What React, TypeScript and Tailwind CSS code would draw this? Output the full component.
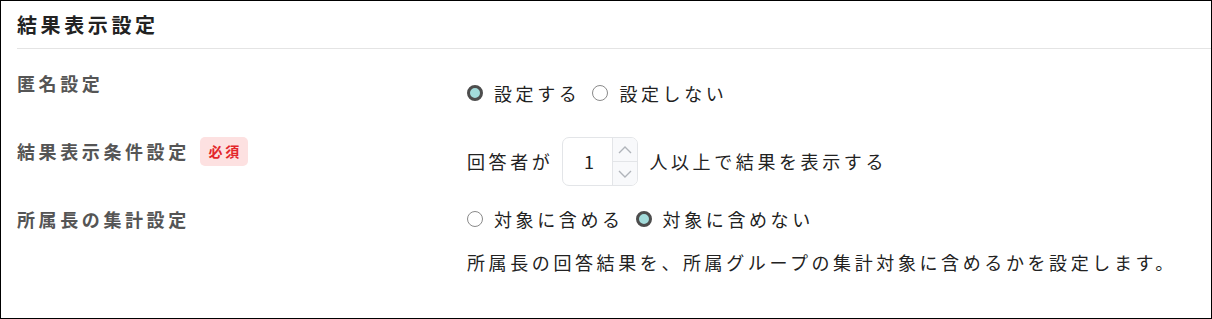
import React from 'react';

const FONT = '"Noto Sans CJK JP", "Noto Sans", sans-serif';

function Radio({ checked, label }: { checked?: boolean; label: string }) {
  return (
    <label className="flex items-center">
      {checked ? (
        <span className="box-border h-[16px] w-[16px] shrink-0 rounded-full border-[3px] border-[#4d4d4d] bg-[#a3dcdb]" />
      ) : (
        <span className="box-border h-[16px] w-[16px] shrink-0 rounded-full border border-[#8a8a8a] bg-white" />
      )}
      <span className="ml-[11px] mr-[12px]">{label}</span>
    </label>
  );
}

function NumberInput({ value }: { value: number }) {
  return (
    <div className="flex h-[49px] w-[76px] overflow-hidden rounded-[7px] border border-[#e3e5e8] bg-white">
      <div className="flex flex-1 items-center justify-center pl-[2px] tracking-normal">{value}</div>
      <div className="flex w-[25px] flex-col border-l border-[#e3e5e8] bg-[#f8f9fb]">
        <div className="flex flex-1 items-center justify-center border-b border-[#e3e5e8]">
          <svg width="14" height="8" viewBox="0 0 14 8" fill="none" stroke="#b0b4ba" strokeWidth="1.4">
            <path d="M1 7l6-6 6 6" />
          </svg>
        </div>
        <div className="flex flex-1 items-center justify-center">
          <svg width="14" height="8" viewBox="0 0 14 8" fill="none" stroke="#b0b4ba" strokeWidth="1.4">
            <path d="M1 1l6 6 6-6" />
          </svg>
        </div>
      </div>
    </div>
  );
}

export default function App() {
  return (
    <div
      className="box-border h-[319px] w-[1212px] border border-black bg-white text-[18px] tracking-[0.2em] text-[#222]"
      style={{ fontFamily: FONT }}
    >
      <div className="ml-[16px] flex h-[48px] items-center border-b border-[#e4e4e4] text-[20px] font-bold text-[#222]">
        結果表示設定
      </div>

      <div className="px-[16px]">
        {/* 匿名設定 */}
        <div className="flex pt-[22px]">
          <div className="w-[450px] shrink-0 leading-[24px] font-bold text-[#555]">匿名設定</div>
          <div className="flex pt-[10px] leading-[24px]">
            <Radio checked label="設定する" />
            <Radio label="設定しない" />
          </div>
        </div>

        {/* 結果表示条件設定 */}
        <div className="mt-[32px] flex items-start">
          <div className="flex h-[29px] w-[450px] shrink-0 items-center font-bold text-[#555]">
            <span>結果表示条件設定</span>
            <span className="ml-[10px] flex h-[29px] w-[48px] items-center justify-center rounded-[5px] bg-[#fde1e1] pl-[3px] text-[14px] tracking-[0.2em] text-[#e3262b]">
              必須
            </span>
          </div>
          <div className="flex h-[49px] items-center">
            <span className="mr-[9px]">回答者が</span>
            <NumberInput value={1} />
            <span className="ml-[11px]">人以上で結果を表示する</span>
          </div>
        </div>

        {/* 所属長の集計設定 */}
        <div className="mt-[21px] flex items-start">
          <div className="w-[450px] shrink-0 leading-[24px] font-bold text-[#555]">所属長の集計設定</div>
          <div className="flex flex-col leading-[24px]">
            <div className="flex">
              <Radio label="対象に含める" />
              <Radio checked label="対象に含めない" />
            </div>
            <p className="mt-[19px]">所属長の回答結果を、所属グループの集計対象に含めるかを設定します。</p>
          </div>
        </div>
      </div>
    </div>
  );
}
